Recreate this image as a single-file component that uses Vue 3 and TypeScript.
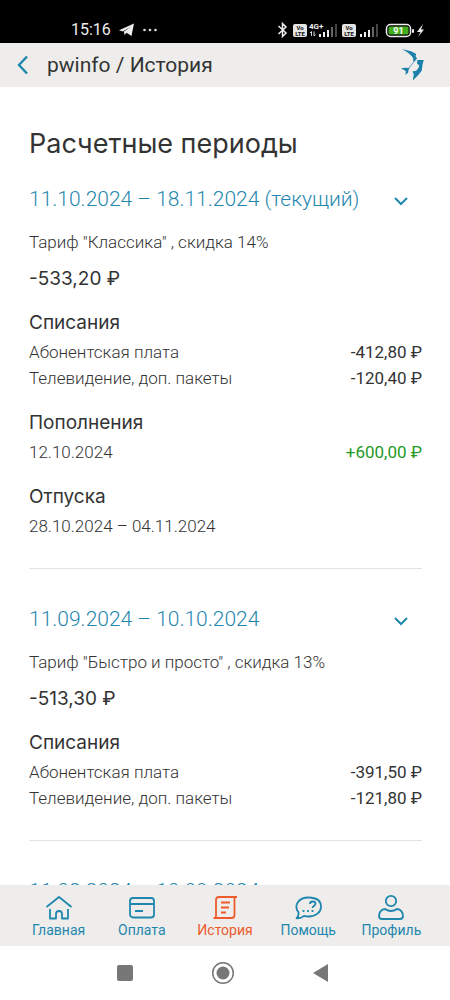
<script setup lang="ts">
interface Line { label: string; amount: string; positive?: boolean }
interface Group { title: string; lines: Line[] }
interface Period { dates: string; tariff: string; total: string; groups: Group[] }
interface Tab { id: string; label: string; active?: boolean }

const periods: Period[] = [
  {
    dates: '11.10.2024 – 18.11.2024 (текущий)',
    tariff: 'Тариф "Классика" , скидка 14%',
    total: '-533,20 ₽',
    groups: [
      { title: 'Списания', lines: [
        { label: 'Абонентская плата', amount: '-412,80 ₽' },
        { label: 'Телевидение, доп. пакеты', amount: '-120,40 ₽' },
      ] },
      { title: 'Пополнения', lines: [{ label: '12.10.2024', amount: '+600,00 ₽', positive: true }] },
      { title: 'Отпуска', lines: [{ label: '28.10.2024 – 04.11.2024', amount: '' }] },
    ],
  },
  {
    dates: '11.09.2024 – 10.10.2024',
    tariff: 'Тариф "Быстро и просто" , скидка 13%',
    total: '-513,30 ₽',
    groups: [
      { title: 'Списания', lines: [
        { label: 'Абонентская плата', amount: '-391,50 ₽' },
        { label: 'Телевидение, доп. пакеты', amount: '-121,80 ₽' },
      ] },
    ],
  },
  { dates: '11.08.2024 – 10.09.2024', tariff: '', total: '', groups: [] },
]

const tabs: Tab[] = [
  { id: 'home', label: 'Главная' },
  { id: 'pay', label: 'Оплата' },
  { id: 'history', label: 'История', active: true },
  { id: 'help', label: 'Помощь' },
  { id: 'profile', label: 'Профиль' },
]
</script>

<template>
  <div class="screen">
    <div class="status">
      <div class="status-left">
        <span>15:16</span>
        <svg width="16" height="14" viewBox="0 0 16 14"><path d="M0 7.200 15 .5 12.500 13 7.500 9.800 5.500 12 5 8.500 12 3.500 3.800 8.500Z" fill="#eee" /></svg>
        <svg width="14" height="4" viewBox="0 0 14 4" fill="#ddd"><circle cx="1.500" cy="2" r="1.300" /><circle cx="7" cy="2" r="1.300" /><circle cx="12.500" cy="2" r="1.300" /></svg>
      </div>
      <svg class="status-icons" width="150" height="18" viewBox="0 0 150 18">
        <path d="M2.500 5 10 12 6.500 15.500V2.500L10 6l-7.500 7" fill="none" stroke="#eee" stroke-width="1.500" />
        <g v-for="x in [17, 66]" :key="x">
          <rect :x="x" y="3" width="14" height="13" rx="2" fill="#e4e4e4" />
          <text :x="x + 7" y="9" text-anchor="middle" class="volte">Vo</text>
          <text :x="x + 7" y="15" text-anchor="middle" class="volte">LTE</text>
        </g>
        <text x="33" y="8" class="net">4G+</text>
        <path d="M35.500 15v-4.500M34 12l1.500-1.500M38 10.500V15M39.500 13.500 38 15" stroke="#ddd" fill="none" />
        <g v-for="x in [43, 84]" :key="'s' + x">
          <rect :x="x" y="13" width="2" height="3" fill="#eee" />
          <rect :x="x + 4" y="11" width="2" height="5" fill="#eee" />
          <rect :x="x + 8" y="9" width="2" height="7" fill="#eee" />
          <rect :x="x + 12" y="6" width="2" height="10" fill="#666" />
          <rect :x="x + 16" y="3" width="2" height="13" fill="#444" />
        </g>
        <rect x="110.500" y="3.500" width="24" height="12" rx="4" fill="none" stroke="#eee" stroke-width="1.500" />
        <rect x="112.500" y="5.500" width="20" height="8" rx="1.500" fill="#43ad1d" />
        <rect x="136" y="8" width="2" height="4" rx="1" fill="#eee" />
        <text x="122.500" y="13" text-anchor="middle" class="charge">91</text>
        <path d="m147 3-6 8h3.500L142 16l6-7.500h-3Z" fill="#eee" />
      </svg>
    </div>

    <header class="header">
      <button class="back" type="button" aria-label="Назад">
        <svg width="12" height="20" viewBox="0 0 12 20"><path d="M10 1.500 2 10l8 8.500" fill="none" stroke="#1f87ae" stroke-width="2.400" /></svg>
      </button>
      <h1>pwinfo / История</h1>
      <svg class="logo" width="24" height="34" viewBox="0 0 24 34" fill="#1a80a9">
        <path d="M1.700 1 11 3.200 16.300 6 15.500 8l1.500 2.500L10 19l-1.500 3-.3 2.500L5.500 27l.3-4L1 20.500l4-.7 3.500.2L13.500 14 13 10Q10 5 1.700 1Z" />
        <path d="M17.300 12h6.500l-1.300 4.500-.7 6-3 4-6 6 1-6.500-1.500-2.500 4-.7 2.500-3.300.3-2.500-2-1Z" />
      </svg>
    </header>

    <main class="content">
      <h2>Расчетные периоды</h2>
      <section v-for="p in periods" :key="p.dates" class="period">
        <button class="dates" type="button">
          <span>{{ p.dates }}</span>
          <svg width="14" height="10" viewBox="0 0 14 10"><path d="m1 2 6 6 6-6" fill="none" stroke="#1f87ae" stroke-width="2" /></svg>
        </button>
        <p v-if="p.tariff" class="tariff">{{ p.tariff }}</p>
        <p v-if="p.total" class="total">{{ p.total }}</p>
        <div v-for="g in p.groups" :key="g.title" class="group">
          <h3>{{ g.title }}</h3>
          <div v-for="l in g.lines" :key="l.label" class="line">
            <span>{{ l.label }}</span>
            <span class="amount" :class="{ positive: l.positive }">{{ l.amount }}</span>
          </div>
        </div>
      </section>
    </main>

    <nav class="tabs">
      <a v-for="t in tabs" :key="t.id" href="#" class="tab" :class="{ active: t.active }">
        <svg width="28" height="28" viewBox="0 0 28 28" fill="none" stroke="currentColor" stroke-width="1.800" stroke-linejoin="round">
          <template v-if="t.id === 'home'">
            <path d="M1.500 14 14 4l12.500 10M5 16v9.500h6V21a3 3 0 0 1 6 0v4.500h6V16" />
          </template>
          <template v-else-if="t.id === 'pay'">
            <rect x="2" y="5" width="24" height="19.500" rx="3" />
            <path d="M2 11h24M7 18h8" />
          </template>
          <template v-else-if="t.id === 'history'">
            <path d="M5 25V7Q5 4 8 4H26M23.500 4V22Q23.500 25 20.500 25H2.500M10 9.500h9M10 14.500h8M10 19.500h5" />
          </template>
          <template v-else-if="t.id === 'help'">
            <path d="M4.500 19.500C-1 12 5 4.500 14.500 4.500S27 9 27 14s-5 9.500-12.500 9.500q-2.500 0-4.500-.7-3 2.700-7.500 2.400 2.500-2.200 2-5.700Z" />
            <path d="M16 11q0-2.500 2.700-2.500 2.800 0 2.800 2.300c0 2-3 2-3 4.200M18.500 17v2M14 17v2M9.500 17v2" />
          </template>
          <template v-else>
            <circle cx="14" cy="8" r="5.200" />
            <path d="M8 16q6 4 12 0c4 0 6 4 6 7q0 3-3 3H5q-3 0-3-3c0-3 2-7 6-7Z" />
          </template>
        </svg>
        <span>{{ t.label }}</span>
      </a>
    </nav>

    <div class="system">
      <button type="button" aria-label="Недавние"><svg width="24" height="24" viewBox="0 0 24 24"><rect x="4" y="4" width="16" height="16" rx="2" fill="#777" /></svg></button>
      <button type="button" aria-label="Домой"><svg width="24" height="24" viewBox="0 0 24 24"><circle cx="12" cy="12" r="10.300" fill="none" stroke="#777" stroke-width="1.500" /><circle cx="12" cy="12" r="6.500" fill="#777" /></svg></button>
      <button type="button" aria-label="Назад"><svg width="24" height="24" viewBox="0 0 24 24"><path d="M4 12 19 3v18Z" fill="#777" /></svg></button>
    </div>
  </div>
</template>

<style>
body { margin: 0; }
</style>

<style scoped>
.screen {
  display: flex;
  flex-direction: column;
  height: 100vh;
  background: #fff;
  color: #333;
  font-family: Roboto, "Open Sans", sans-serif;
}
svg { display: block; }
h1, h2, h3, p { margin: 0; font-weight: 400; }
button { border: 0; padding: 0; background: none; font: inherit; color: inherit; }
.status {
  display: flex;
  flex: none;
  justify-content: space-between;
  align-items: flex-end;
  height: 43px;
  box-sizing: border-box;
  padding: 0 24px 4px 71px;
  background: #000;
  color: #eee;
}
.status-left { display: flex; align-items: center; gap: 8px; font-size: 16px; line-height: 18px; }
.volte { font: 700 6px Roboto, sans-serif; fill: #111; }
.net { font: 700 8px Roboto, sans-serif; fill: #eee; }
.charge { font: 700 9px Roboto, sans-serif; fill: #fff; }
.header {
  display: flex;
  flex: none;
  align-items: center;
  height: 44px;
  padding: 0 26px 0 17px;
  background: #eeedeb;
}
.back { margin-right: 18px; }
h1 { flex: 1; font-size: 21px; line-height: 28px; }
.content { flex: 1; min-height: 0; overflow: hidden; padding: 37px 28px 0 29px; }
h2 { margin-bottom: 19px; font-family: Inter, sans-serif; font-size: 27px; line-height: 40px; }
.period { margin-bottom: 34px; padding-bottom: 29px; border-bottom: 1px solid #e3e3e3; }
.dates {
  display: flex;
  justify-content: space-between;
  align-items: center;
  width: 100%;
  padding-right: 14px;
  color: #1f87ae;
  font-size: 21px;
  font-weight: 300;
  line-height: 32px;
}
.dates svg { margin-top: 4px; }
.tariff { margin-top: 14px; font-size: 17px; font-weight: 300; line-height: 26px; }
.total { margin-top: 9px; font-family: Inter, sans-serif; font-size: 19px; line-height: 30px; }
.group { margin-top: 16px; }
.total + .group { margin-top: 13px; }
h3 { font-family: Inter, sans-serif; font-size: 19px; line-height: 32px; }
.line { display: flex; justify-content: space-between; font-size: 17px; font-weight: 300; line-height: 26px; }
.amount { font-weight: 400; }
.positive { color: #1f9a24; }
.tabs {
  display: flex;
  flex: none;
  height: 61px;
  padding: 0 17px;
  background: #eeedeb;
}
.tab {
  display: flex;
  flex: 1;
  flex-direction: column;
  align-items: center;
  padding-top: 8px;
  color: #1f87ae;
  font-size: 14px;
  line-height: 18px;
  text-decoration: none;
}
.active { color: #ee5a2c; }
.system { display: flex; flex: none; justify-content: center; align-items: center; gap: 74px; height: 54px; padding-right: 4px; }
</style>
